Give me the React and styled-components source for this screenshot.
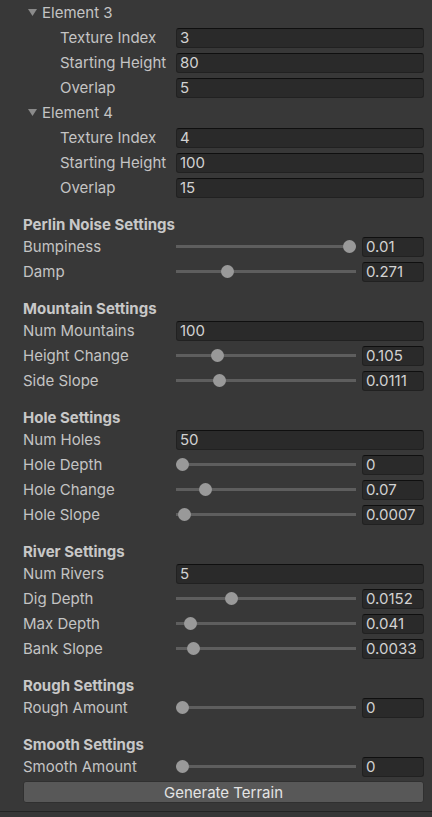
import React from "react";
import styled, { createGlobalStyle } from "styled-components";

const Global = createGlobalStyle`
  html, body { margin: 0; padding: 0; background: #383838; }
  body { font-family: Inter, "Noto Sans", sans-serif; color: #c4c4c4; font-size: 15px; }
`;

const Panel = styled.div`
  width: 432px;
  height: 817px;
  background: #383838;
  display: flex;
  flex-direction: column;
  box-sizing: border-box;
  overflow: hidden;
`;

const Content = styled.div`
  display: flex;
  flex-direction: column;
  padding: 0 8px 0 23px;
`;

const FoldoutRow = styled.div`
  height: 25px;
  display: flex;
  align-items: center;
  gap: 5px;
  padding-left: 5px;
`;

const Arrow = styled.svg`
  width: 9px;
  height: 7px;
  flex: none;
`;

const Row = styled.div`
  height: 25px;
  display: flex;
  align-items: center;
`;

const Label = styled.div`
  width: ${(p) => (p.$indent ? 116 : 153)}px;
  padding-left: ${(p) => (p.$indent ? 37 : 0)}px;
  flex: none;
  white-space: nowrap;
  color: #c4c4c4;
  line-height: 20px;
`;

const Field = styled.div`
  height: 20px;
  box-sizing: border-box;
  background: #2a2a2a;
  border: 1px solid #212121;
  border-top-color: #0f0f0f;
  border-radius: 3px;
  color: #d2d2d2;
  padding-left: 3px;
  display: flex;
  align-items: center;
  flex: ${(p) => (p.$fixed ? "none" : "1")};
  width: ${(p) => (p.$fixed ? "62px" : "auto")};
`;

const Header = styled.div`
  height: 20px;
  margin-top: 14px;
  display: flex;
  align-items: center;
  font-weight: 700;
  color: #c8c8c8;
`;

const SliderWrap = styled.div`
  flex: 1;
  display: flex;
  align-items: center;
  gap: 6px;
`;

const Track = styled.div`
  flex: 1;
  height: 20px;
  position: relative;
  display: flex;
  align-items: center;
`;

const Rail = styled.div`
  height: 3px;
  width: 100%;
  background: #5e5e5e;
`;

const Thumb = styled.div`
  position: absolute;
  top: 50%;
  width: 13px;
  height: 13px;
  margin-top: -6.5px;
  border-radius: 50%;
  background: #999999;
`;

const Button = styled.div`
  margin-top: 2px;
  height: 22px;
  box-sizing: border-box;
  background: #585858;
  border: 1px solid #303030;
  border-radius: 3px;
  color: #e4e4e4;
  display: flex;
  align-items: center;
  justify-content: center;
`;

const Footer = styled.div`
  margin-top: 8px;
  border-top: 1px solid #232323;
  flex: 1;
  background: #363636;
`;

const Foldout = ({ children }) => (
  <FoldoutRow>
    <Arrow viewBox="0 0 9 7">
      <polygon points="0,0 9,0 4.5,7" fill="#8a8a8a" />
    </Arrow>
    <span>{children}</span>
  </FoldoutRow>
);

const IntRow = ({ label, value, indent }) => (
  <Row>
    <Label $indent={indent}>{label}</Label>
    <Field>{value}</Field>
  </Row>
);

const SliderRow = ({ label, value, frac }) => (
  <Row>
    <Label>{label}</Label>
    <SliderWrap>
      <Track>
        <Rail />
        <Thumb style={{ left: `calc(${frac} * (100% - 13px))` }} />
      </Track>
      <Field $fixed>{value}</Field>
    </SliderWrap>
  </Row>
);

const Element = ({ name, tex, height, overlap }) => (
  <>
    <Foldout>{name}</Foldout>
    <IntRow indent label="Texture Index" value={tex} />
    <IntRow indent label="Starting Height" value={height} />
    <IntRow indent label="Overlap" value={overlap} />
  </>
);

export default function App() {
  return (
    <Panel>
      <Global />
      <Content>
        <Element name="Element 3" tex="3" height="80" overlap="5" />
        <Element name="Element 4" tex="4" height="100" overlap="15" />

        <Header>Perlin Noise Settings</Header>
        <SliderRow label="Bumpiness" value="0.01" frac={1} />
        <SliderRow label="Damp" value="0.271" frac={0.271} />

        <Header>Mountain Settings</Header>
        <IntRow label="Num Mountains" value="100" />
        <SliderRow label="Height Change" value="0.105" frac={0.21} />
        <SliderRow label="Side Slope" value="0.0111" frac={0.222} />

        <Header>Hole Settings</Header>
        <IntRow label="Num Holes" value="50" />
        <SliderRow label="Hole Depth" value="0" frac={0} />
        <SliderRow label="Hole Change" value="0.07" frac={0.14} />
        <SliderRow label="Hole Slope" value="0.0007" frac={0.014} />

        <Header>River Settings</Header>
        <IntRow label="Num Rivers" value="5" />
        <SliderRow label="Dig Depth" value="0.0152" frac={0.295} />
        <SliderRow label="Max Depth" value="0.041" frac={0.045} />
        <SliderRow label="Bank Slope" value="0.0033" frac={0.066} />

        <Header>Rough Settings</Header>
        <SliderRow label="Rough Amount" value="0" frac={0} />

        <Header>Smooth Settings</Header>
        <SliderRow label="Smooth Amount" value="0" frac={0} />

        <Button>Generate Terrain</Button>
      </Content>
      <Footer />
    </Panel>
  );
}
